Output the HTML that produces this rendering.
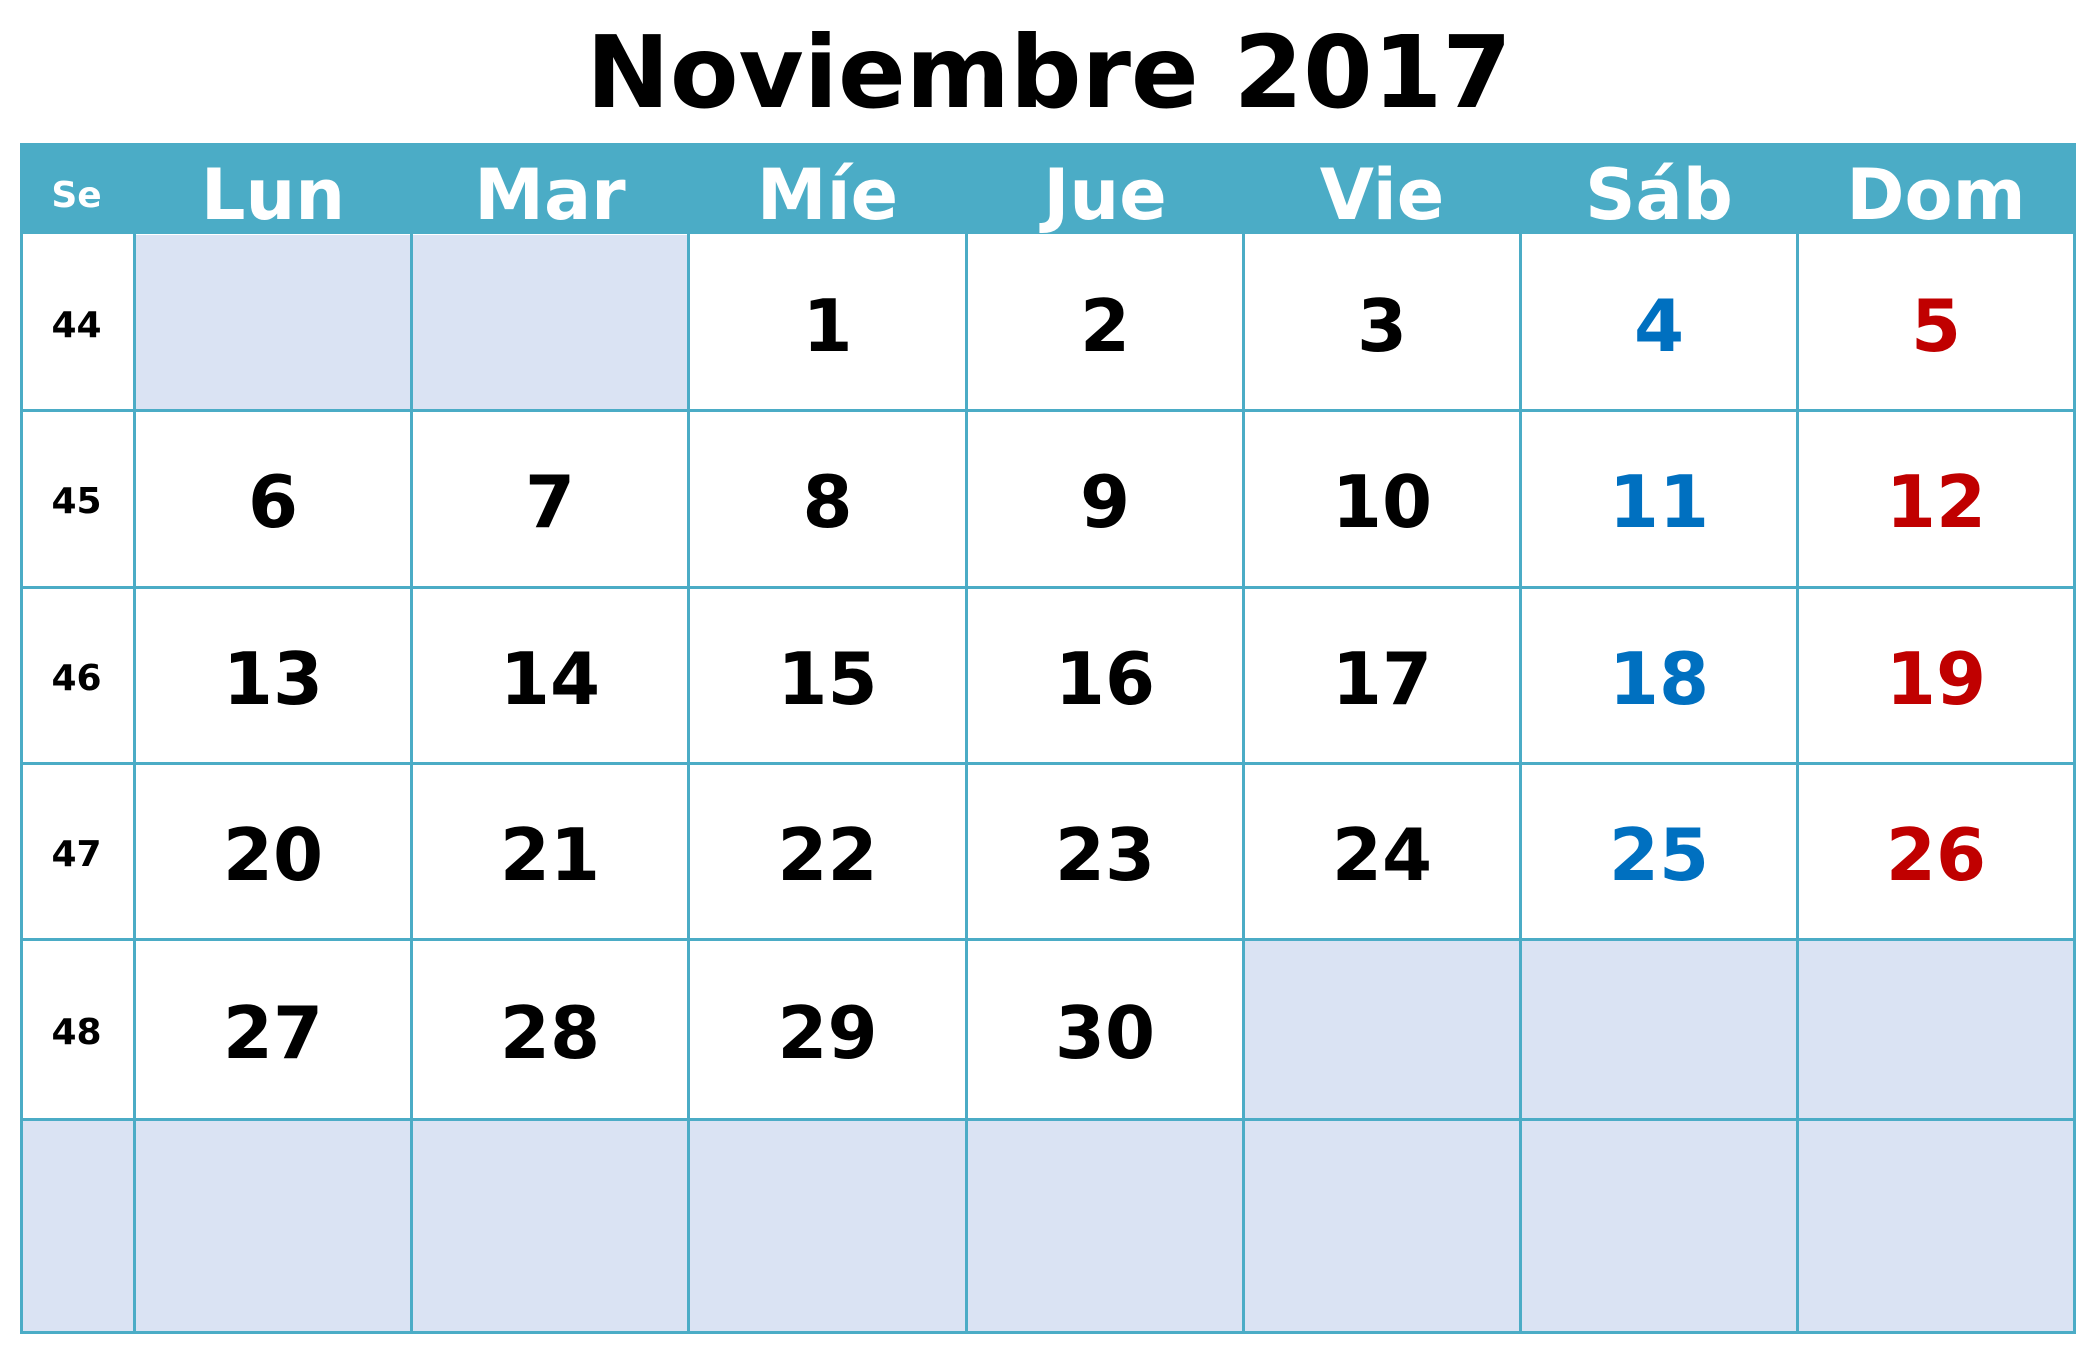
<!DOCTYPE html>
<html><head><meta charset="utf-8"><style>
html,body{margin:0;padding:0;background:#fff;}
body{width:2098px;height:1347px;position:relative;overflow:hidden;font-family:"DejaVu Sans","Liberation Sans",sans-serif;font-weight:bold;}
.a{position:absolute;}
.t{position:absolute;text-align:center;display:flex;align-items:center;justify-content:center;}
.h{color:#fff;font-size:70px;}
.n{font-size:72px;color:#000;}
.w{font-size:36px;color:#000;}
.b{color:#0070C0}.r{color:#C00000}
.f{background:#DAE3F3;position:absolute;}
.vl{position:absolute;width:3px;background:#4BACC6;top:233px;height:1101px;}
.hl{position:absolute;height:3px;background:#4BACC6;left:20px;width:2056px;}
</style></head><body>
<div class="t" style="left:0;width:2098px;top:22px;height:100px;font-size:100px;color:#000;">Noviembre 2017</div>
<div class="a" style="left:20px;top:143px;width:2056px;height:91px;background:#4BACC6;"></div>
<!-- fills -->
<div class="f" style="left:134px;top:235px;width:554px;height:175px;"></div>
<div class="f" style="left:1244px;top:941px;width:830px;height:179px;"></div>
<div class="f" style="left:20px;top:1120px;width:2054px;height:213px;"></div>
<!-- lines -->
<div class="vl" style="left:20px"></div>
<div class="vl" style="left:133px"></div>
<div class="vl" style="left:410px"></div>
<div class="vl" style="left:687px"></div>
<div class="vl" style="left:965px"></div>
<div class="vl" style="left:1242px"></div>
<div class="vl" style="left:1519px"></div>
<div class="vl" style="left:1796px"></div>
<div class="vl" style="left:2073px"></div>
<div class="hl" style="top:409px"></div>
<div class="hl" style="top:586px"></div>
<div class="hl" style="top:762px"></div>
<div class="hl" style="top:938px"></div>
<div class="hl" style="top:1118px"></div>
<div class="hl" style="top:1331px"></div>
<!-- header -->
<div class="t h" style="left:20px;width:113px;top:146px;height:98px;font-size:36px;">Se</div>
<div class="t h" style="left:136px;width:274px;top:146px;height:98px;">Lun</div>
<div class="t h" style="left:413px;width:274px;top:146px;height:98px;">Mar</div>
<div class="t h" style="left:690px;width:275px;top:146px;height:98px;">Míe</div>
<div class="t h" style="left:968px;width:274px;top:146px;height:98px;">Jue</div>
<div class="t h" style="left:1245px;width:274px;top:146px;height:98px;">Vie</div>
<div class="t h" style="left:1522px;width:274px;top:146px;height:98px;">Sáb</div>
<div class="t h" style="left:1799px;width:274px;top:146px;height:98px;">Dom</div>
<!-- week numbers -->
<div class="t w" style="left:20px;width:113px;top:238px;height:174px;">44</div>
<div class="t w" style="left:20px;width:113px;top:414px;height:174px;">45</div>
<div class="t w" style="left:20px;width:113px;top:591px;height:174px;">46</div>
<div class="t w" style="left:20px;width:113px;top:767px;height:174px;">47</div>
<div class="t w" style="left:20px;width:113px;top:943px;height:178px;">48</div>
<!-- row 1 -->
<div class="t n" style="left:690px;width:275px;top:239px;height:174px;">1</div>
<div class="t n" style="left:968px;width:274px;top:239px;height:174px;">2</div>
<div class="t n" style="left:1245px;width:274px;top:239px;height:174px;">3</div>
<div class="t n b" style="left:1522px;width:274px;top:239px;height:174px;">4</div>
<div class="t n r" style="left:1799px;width:274px;top:239px;height:174px;">5</div>
<!-- row 2 -->
<div class="t n" style="left:136px;width:274px;top:415px;height:174px;">6</div>
<div class="t n" style="left:413px;width:274px;top:415px;height:174px;">7</div>
<div class="t n" style="left:690px;width:275px;top:415px;height:174px;">8</div>
<div class="t n" style="left:968px;width:274px;top:415px;height:174px;">9</div>
<div class="t n" style="left:1245px;width:274px;top:415px;height:174px;">10</div>
<div class="t n b" style="left:1522px;width:274px;top:415px;height:174px;">11</div>
<div class="t n r" style="left:1799px;width:274px;top:415px;height:174px;">12</div>
<!-- row 3 -->
<div class="t n" style="left:136px;width:274px;top:592px;height:174px;">13</div>
<div class="t n" style="left:413px;width:274px;top:592px;height:174px;">14</div>
<div class="t n" style="left:690px;width:275px;top:592px;height:174px;">15</div>
<div class="t n" style="left:968px;width:274px;top:592px;height:174px;">16</div>
<div class="t n" style="left:1245px;width:274px;top:592px;height:174px;">17</div>
<div class="t n b" style="left:1522px;width:274px;top:592px;height:174px;">18</div>
<div class="t n r" style="left:1799px;width:274px;top:592px;height:174px;">19</div>
<!-- row 4 -->
<div class="t n" style="left:136px;width:274px;top:768px;height:174px;">20</div>
<div class="t n" style="left:413px;width:274px;top:768px;height:174px;">21</div>
<div class="t n" style="left:690px;width:275px;top:768px;height:174px;">22</div>
<div class="t n" style="left:968px;width:274px;top:768px;height:174px;">23</div>
<div class="t n" style="left:1245px;width:274px;top:768px;height:174px;">24</div>
<div class="t n b" style="left:1522px;width:274px;top:768px;height:174px;">25</div>
<div class="t n r" style="left:1799px;width:274px;top:768px;height:174px;">26</div>
<!-- row 5 -->
<div class="t n" style="left:136px;width:274px;top:944px;height:178px;">27</div>
<div class="t n" style="left:413px;width:274px;top:944px;height:178px;">28</div>
<div class="t n" style="left:690px;width:275px;top:944px;height:178px;">29</div>
<div class="t n" style="left:968px;width:274px;top:944px;height:178px;">30</div>
</body></html>
